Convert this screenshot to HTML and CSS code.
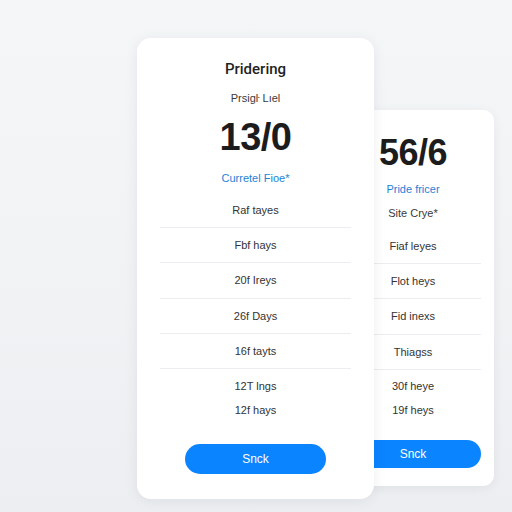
FILE: index.html
```html
<!DOCTYPE html>
<html lang="en">
<head>
  <meta charset="UTF-8">
  <meta name="viewport" content="width=device-width, initial-scale=1.0">
  <title>Pridering</title>
  <link rel="stylesheet" href="styles.css">
</head>
<body>
  <main class="plans">
    <section class="card card-main">
      <h1 class="card-title">Pridering</h1>
      <p class="card-sub">Prsigŀ Lıel</p>
      <div class="price">13/0</div>
      <a class="price-link" href="#">Curretel Fioe*</a>
      <ul class="rows">
        <li>Raf tayes</li>
        <li>Fbf hays</li>
        <li>20f Ireys</li>
        <li>26f Days</li>
        <li>16f tayts</li>
      </ul>
      <ul class="rows rows-plain">
        <li>12T lngs</li>
        <li>12f hays</li>
      </ul>
      <button class="btn">Snck</button>
    </section>

    <section class="card card-back">
      <div class="price">56/6</div>
      <a class="price-link" href="#">Pride fricer</a>
      <p class="card-sub">Site Crye*</p>
      <ul class="rows">
        <li>Fiaf leyes</li>
        <li>Flot heys</li>
        <li>Fid inexs</li>
        <li>Thiagss</li>
      </ul>
      <ul class="rows rows-plain">
        <li>30f heye</li>
        <li>19f heys</li>
      </ul>
      <button class="btn">Snck</button>
    </section>
  </main>
</body>
</html>
```

FILE: styles.css
```css
html, body {
  margin: 0;
  padding: 0;
}
body {
  width: 512px;
  height: 512px;
  overflow: hidden;
  font-family: "Liberation Sans", Arial, sans-serif;
  color: #2a2a2a;
  background: linear-gradient(180deg, #f5f6f8 0%, #f1f2f4 60%, #eceef1 100%);
}
.plans {
  display: flex;
  align-items: flex-start;
  padding: 38px 0 0 137px;
}
.card {
  background: #fff;
  text-align: center;
  box-sizing: border-box;
}
.card-main {
  width: 237px;
  height: 461px;
  padding: 22px 23px 0;
  border-radius: 14px;
  box-shadow: 0 2px 14px rgba(20, 30, 50, 0.07);
  z-index: 2;
}
.card-back {
  width: 162px;
  height: 376px;
  margin-left: -42px;
  margin-top: 72px;
  padding: 23px 13px 0;
  border-radius: 11px;
  box-shadow: 0 2px 12px rgba(20, 30, 50, 0.06);
  z-index: 1;
}
.card-title {
  margin: 0;
  font-family: Roboto, "Liberation Sans", sans-serif;
  font-size: 15px;
  line-height: 18px;
  font-weight: 500;
  color: #1f1f1f;
}
.card-sub {
  margin: 13px 0 0;
  font-size: 11px;
  line-height: 14px;
  color: #3a3a3a;
}
.price {
  margin-top: 12px;
  font-size: 38px;
  line-height: 40px;
  font-weight: 700;
  color: #1c1c1c;
  letter-spacing: -0.5px;
}
.price-link {
  display: block;
  margin-top: 14px;
  font-size: 11px;
  line-height: 14px;
  color: #1e82d6;
  text-decoration: none;
}
.rows {
  list-style: none;
  margin: 8px 0 0;
  padding: 0;
}
.rows li {
  height: 34px;
  line-height: 34px;
  font-size: 11px;
  color: #333;
  border-bottom: 1px solid #ebedf0;
}
.rows li:nth-child(3) {
  height: 35px;
}
.rows-plain {
  margin-top: 5px;
}
.rows-plain li,
.rows-plain li:nth-child(3) {
  height: 24px;
  line-height: 24px;
  border-bottom: none;
}
.btn {
  display: block;
  width: 141px;
  height: 30px;
  margin: 22px auto 0;
  border: none;
  border-radius: 15px;
  background: #0a84ff;
  color: #fff;
  font-family: inherit;
  font-size: 12px;
}

/* back card sits lower and tighter */
.card-back .price {
  margin-top: 0;
  font-size: 36px;
}
.card-back .price-link {
  margin-top: 9px;
}
.card-back .card-sub {
  margin-top: 10px;
}
.card-back .rows {
  margin-top: 9px;
}
.card-back .rows-plain {
  margin-top: 4px;
}
.card-back .btn {
  width: 100%;
  height: 28px;
  border-radius: 14px;
  margin-top: 18px;
}
```
